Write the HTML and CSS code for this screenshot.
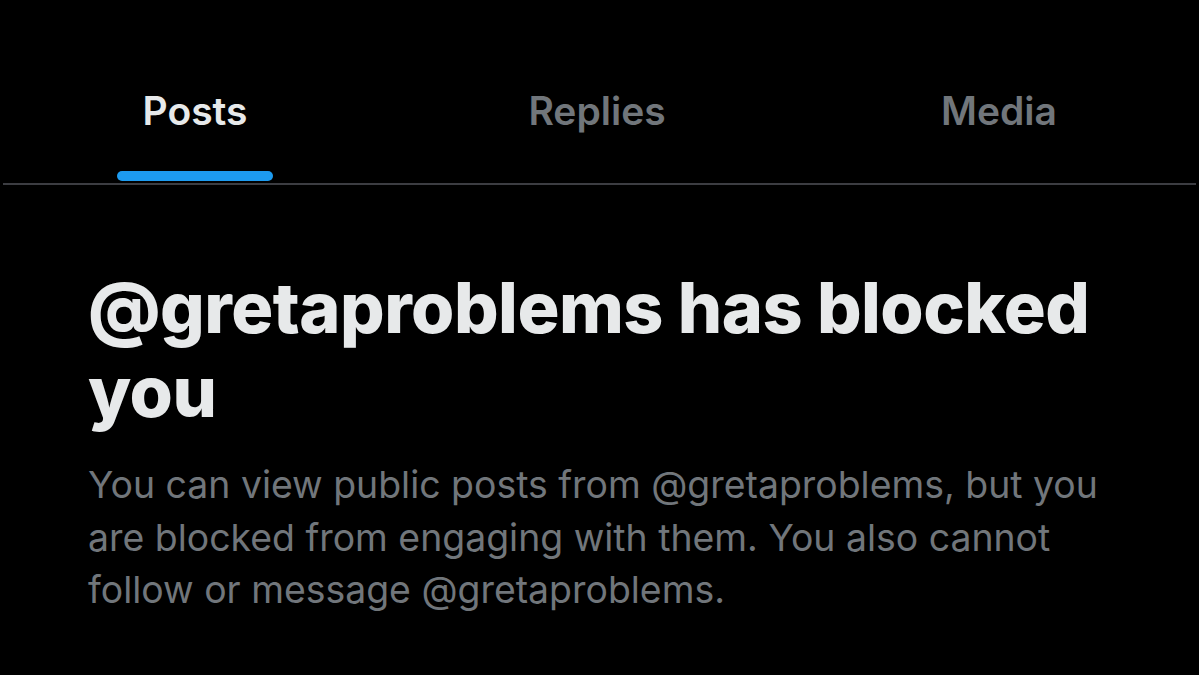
FILE: index.html
```html
<!DOCTYPE html>
<html lang="en">
<head>
  <meta charset="UTF-8" />
  <title>Profile – Blocked</title>
  <link rel="stylesheet" href="styles.css">
</head>
<body>

<div class="tabs">
  <div class="tab-row">
    <div class="tab active"><span class="label">Posts</span><span class="indicator"></span></div>
    <div class="tab"><span class="label">Replies</span><span class="indicator"></span></div>
    <div class="tab"><span class="label">Media</span><span class="indicator"></span></div>
  </div>
</div>

<div class="blocked">
  <h1>@gretaproblems has blocked you</h1>
  <p>You can view public posts from @gretaproblems, but you are blocked from engaging with them. You also cannot follow or message @gretaproblems.</p>
</div>

</body>
</html>
```

FILE: styles.css
```css
body { margin: 0; padding: 0; background: #000; color: #e7e9ea; font-family: Inter, "Noto Sans", sans-serif; overflow: hidden; }
.tabs { margin: 0 3px; border-bottom: 2px solid #3c3d42; height: 183px; }
.tab-row { display: flex; height: 100%; margin: 0 -4px 0 -9px; }
.tab { flex: 1; display: flex; flex-direction: column; align-items: center; justify-content: flex-end; }
.tab .label { font-size: 39px; font-weight: 600; color: #71767b; line-height: 44px; margin-bottom: 38px; }
.tab.active .label { color: #e7e9ea; }
.tab .indicator { width: 156px; height: 10px; border-radius: 5px; margin-bottom: 2px; }
.tab.active .indicator { background: #1d9bf0; }
.blocked { padding: 0 80px 0 88px; }
.blocked h1 { font-size: 70px; font-weight: 800; line-height: 84px; margin: 81px 0 25px; letter-spacing: -0.5px; }
.blocked p { font-size: 37.4px; line-height: 52.5px; color: #71767b; margin: 0; }
```
